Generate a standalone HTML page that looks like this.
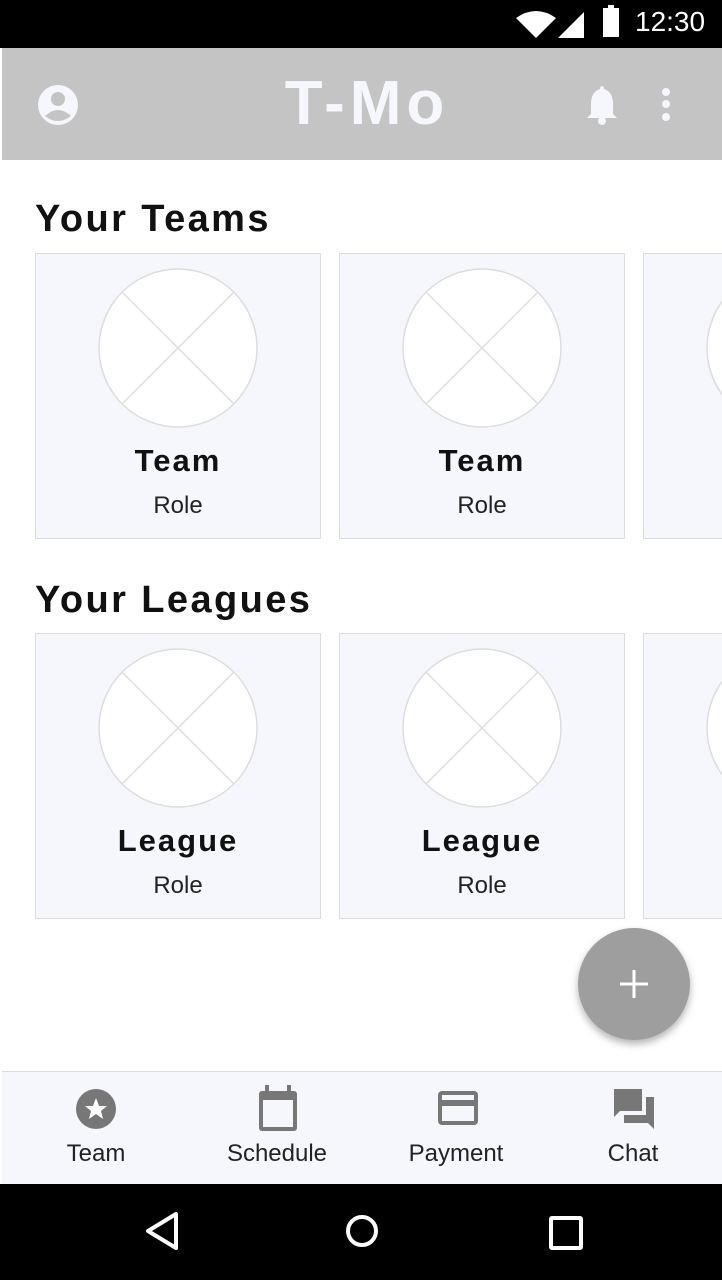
<!DOCTYPE html>
<html><head><style>
body{margin:0;width:722px;height:1280px;position:relative;overflow:hidden;background:#fff;font-family:"Liberation Sans",sans-serif}
.abs{position:absolute}
.card{position:absolute;width:284px;height:284px;background:#f6f7fc;border:1px solid #dcdcdc;overflow:hidden}
.card svg{position:absolute;left:62px;top:14px}
.t{position:absolute;left:0;right:0;top:189px;text-align:center;font-size:31px;font-weight:bold;color:#111;letter-spacing:2px}
.r{position:absolute;left:0;right:0;top:238px;text-align:center;font-size:24px;color:#222}
h2{position:absolute;left:35px;margin:0;font-size:38px;font-weight:bold;color:#111;letter-spacing:2.4px}
.nav{position:absolute;top:1140px;font-size:24px;color:#222;text-align:center;width:140px}
</style></head><body>
<div class="abs" style="left:0;top:0;width:722px;height:48px;background:#000"></div>
<svg class="abs" style="left:514px;top:8px" width="80" height="32" viewBox="0 0 80 32">
<path d="M2 10 Q22 -4 42 10 L22 30 Z" fill="#fff"/>
<path d="M44 30 L70 4 L70 30 Z" fill="#fff"/>
</svg>
<div class="abs" style="left:603px;top:8px;width:16px;height:29px;background:#fff"></div>
<div class="abs" style="left:608px;top:5px;width:6px;height:4px;background:#fff"></div>
<div class="abs" style="left:635px;top:6px;font-size:28px;color:#fff">12:30</div>
<div class="abs" style="left:2px;top:48px;width:720px;height:112px;background:#c4c4c4"></div>
<svg class="abs" style="left:37px;top:84px" width="42" height="42" viewBox="0 0 42 42">
<circle cx="21" cy="21" r="20" fill="#f6f7fc"/><circle cx="21" cy="15" r="7" fill="#c4c4c4"/>
<path d="M8 32 Q21 20 34 32 Q21 42 8 32Z" fill="#c4c4c4"/></svg>
<div class="abs" style="left:6px;width:722px;top:68px;text-align:center;font-size:62px;font-weight:bold;color:#f6f7fc;letter-spacing:5px">T-Mo</div>
<svg class="abs" style="left:585px;top:84px" width="34" height="42" viewBox="0 0 34 42">
<path d="M17 2 Q19 2 19 5 Q28 8 28 20 L28 30 L32 34 L2 34 L6 30 L6 20 Q6 8 15 5 Q15 2 17 2Z" fill="#f6f7fc"/>
<circle cx="17" cy="37" r="4" fill="#f6f7fc"/></svg>
<svg class="abs" style="left:659px;top:86px" width="14" height="38"><circle cx="7" cy="6" r="4" fill="#f6f7fc"/><circle cx="7" cy="18" r="4" fill="#f6f7fc"/><circle cx="7" cy="31" r="4" fill="#f6f7fc"/></svg>

<h2 style="top:198px">Your Teams</h2>
<h2 style="top:579px">Your Leagues</h2>

<div class="card" style="left:35px;top:253px"><svg width="160" height="160"><circle cx="80" cy="80" r="79" fill="#fff" stroke="#ddd" stroke-width="1.5"/><path d="M24 24 L136 136 M136 24 L24 136" stroke="#ddd" stroke-width="1.5"/></svg><div class="t">Team</div><div class="r">Role</div></div>
<div class="card" style="left:339px;top:253px"><svg width="160" height="160"><circle cx="80" cy="80" r="79" fill="#fff" stroke="#ddd" stroke-width="1.5"/><path d="M24 24 L136 136 M136 24 L24 136" stroke="#ddd" stroke-width="1.5"/></svg><div class="t">Team</div><div class="r">Role</div></div>
<div class="card" style="left:643px;top:253px;width:79px;border-right:none"><svg width="160" height="160"><circle cx="80" cy="80" r="79" fill="#fff" stroke="#ddd" stroke-width="1.5"/></svg></div>
<div class="card" style="left:35px;top:633px"><svg width="160" height="160"><circle cx="80" cy="80" r="79" fill="#fff" stroke="#ddd" stroke-width="1.5"/><path d="M24 24 L136 136 M136 24 L24 136" stroke="#ddd" stroke-width="1.5"/></svg><div class="t">League</div><div class="r">Role</div></div>
<div class="card" style="left:339px;top:633px"><svg width="160" height="160"><circle cx="80" cy="80" r="79" fill="#fff" stroke="#ddd" stroke-width="1.5"/><path d="M24 24 L136 136 M136 24 L24 136" stroke="#ddd" stroke-width="1.5"/></svg><div class="t">League</div><div class="r">Role</div></div>
<div class="card" style="left:643px;top:633px;width:79px;border-right:none"><svg width="160" height="160"><circle cx="80" cy="80" r="79" fill="#fff" stroke="#ddd" stroke-width="1.5"/></svg></div>

<div class="abs" style="left:578px;top:928px;width:112px;height:112px;border-radius:50%;background:#9e9e9e;box-shadow:0 4px 8px rgba(0,0,0,0.3)"></div>
<svg class="abs" style="left:618px;top:968px" width="32" height="32"><path d="M16 2V30M2 16H30" stroke="#fff" stroke-width="3"/></svg>

<div class="abs" style="left:2px;top:1071px;width:720px;height:113px;background:#f6f7fc;border-top:1px solid #ddd"></div>
<svg class="abs" style="left:75px;top:1088px" width="42" height="42"><circle cx="21" cy="21" r="20" fill="#777"/><path d="M21 10 L24 18 L32 18 L26 23 L28 31 L21 26 L14 31 L16 23 L10 18 L18 18Z" fill="#fff"/></svg>
<svg class="abs" style="left:257px;top:1085px" width="42" height="48"><rect x="2" y="6" width="38" height="40" rx="3" fill="#777"/><rect x="6" y="15" width="30" height="27" fill="#f6f7fc"/><rect x="8" y="0" width="4" height="8" fill="#777"/><rect x="30" y="0" width="4" height="8" fill="#777"/></svg>
<svg class="abs" style="left:437px;top:1090px" width="42" height="36"><rect x="1" y="1" width="40" height="34" rx="4" fill="#777"/><rect x="5" y="5" width="32" height="5" fill="#f6f7fc"/><rect x="5" y="16" width="32" height="15" fill="#f6f7fc"/></svg>
<svg class="abs" style="left:612px;top:1087px" width="44" height="44"><path d="M2 2 H30 V24 H8 L2 30Z" fill="#777"/><path d="M34 10 H42 V42 L36 36 H12 V28 H34Z" fill="#777"/></svg>
<div class="nav" style="left:26px">Team</div>
<div class="nav" style="left:207px">Schedule</div>
<div class="nav" style="left:386px">Payment</div>
<div class="nav" style="left:563px">Chat</div>

<div class="abs" style="left:0;top:1184px;width:722px;height:96px;background:#000"></div>
<svg class="abs" style="left:140px;top:1208px" width="250" height="48">
<path d="M36 6 L36 40 L8 23Z" fill="none" stroke="#fff" stroke-width="4" stroke-linejoin="round"/>
<circle cx="222" cy="23" r="14" fill="none" stroke="#fff" stroke-width="4"/></svg>
<div class="abs" style="left:549px;top:1216px;width:26px;height:26px;border:4px solid #fff;border-radius:3px"></div>
</body></html>
